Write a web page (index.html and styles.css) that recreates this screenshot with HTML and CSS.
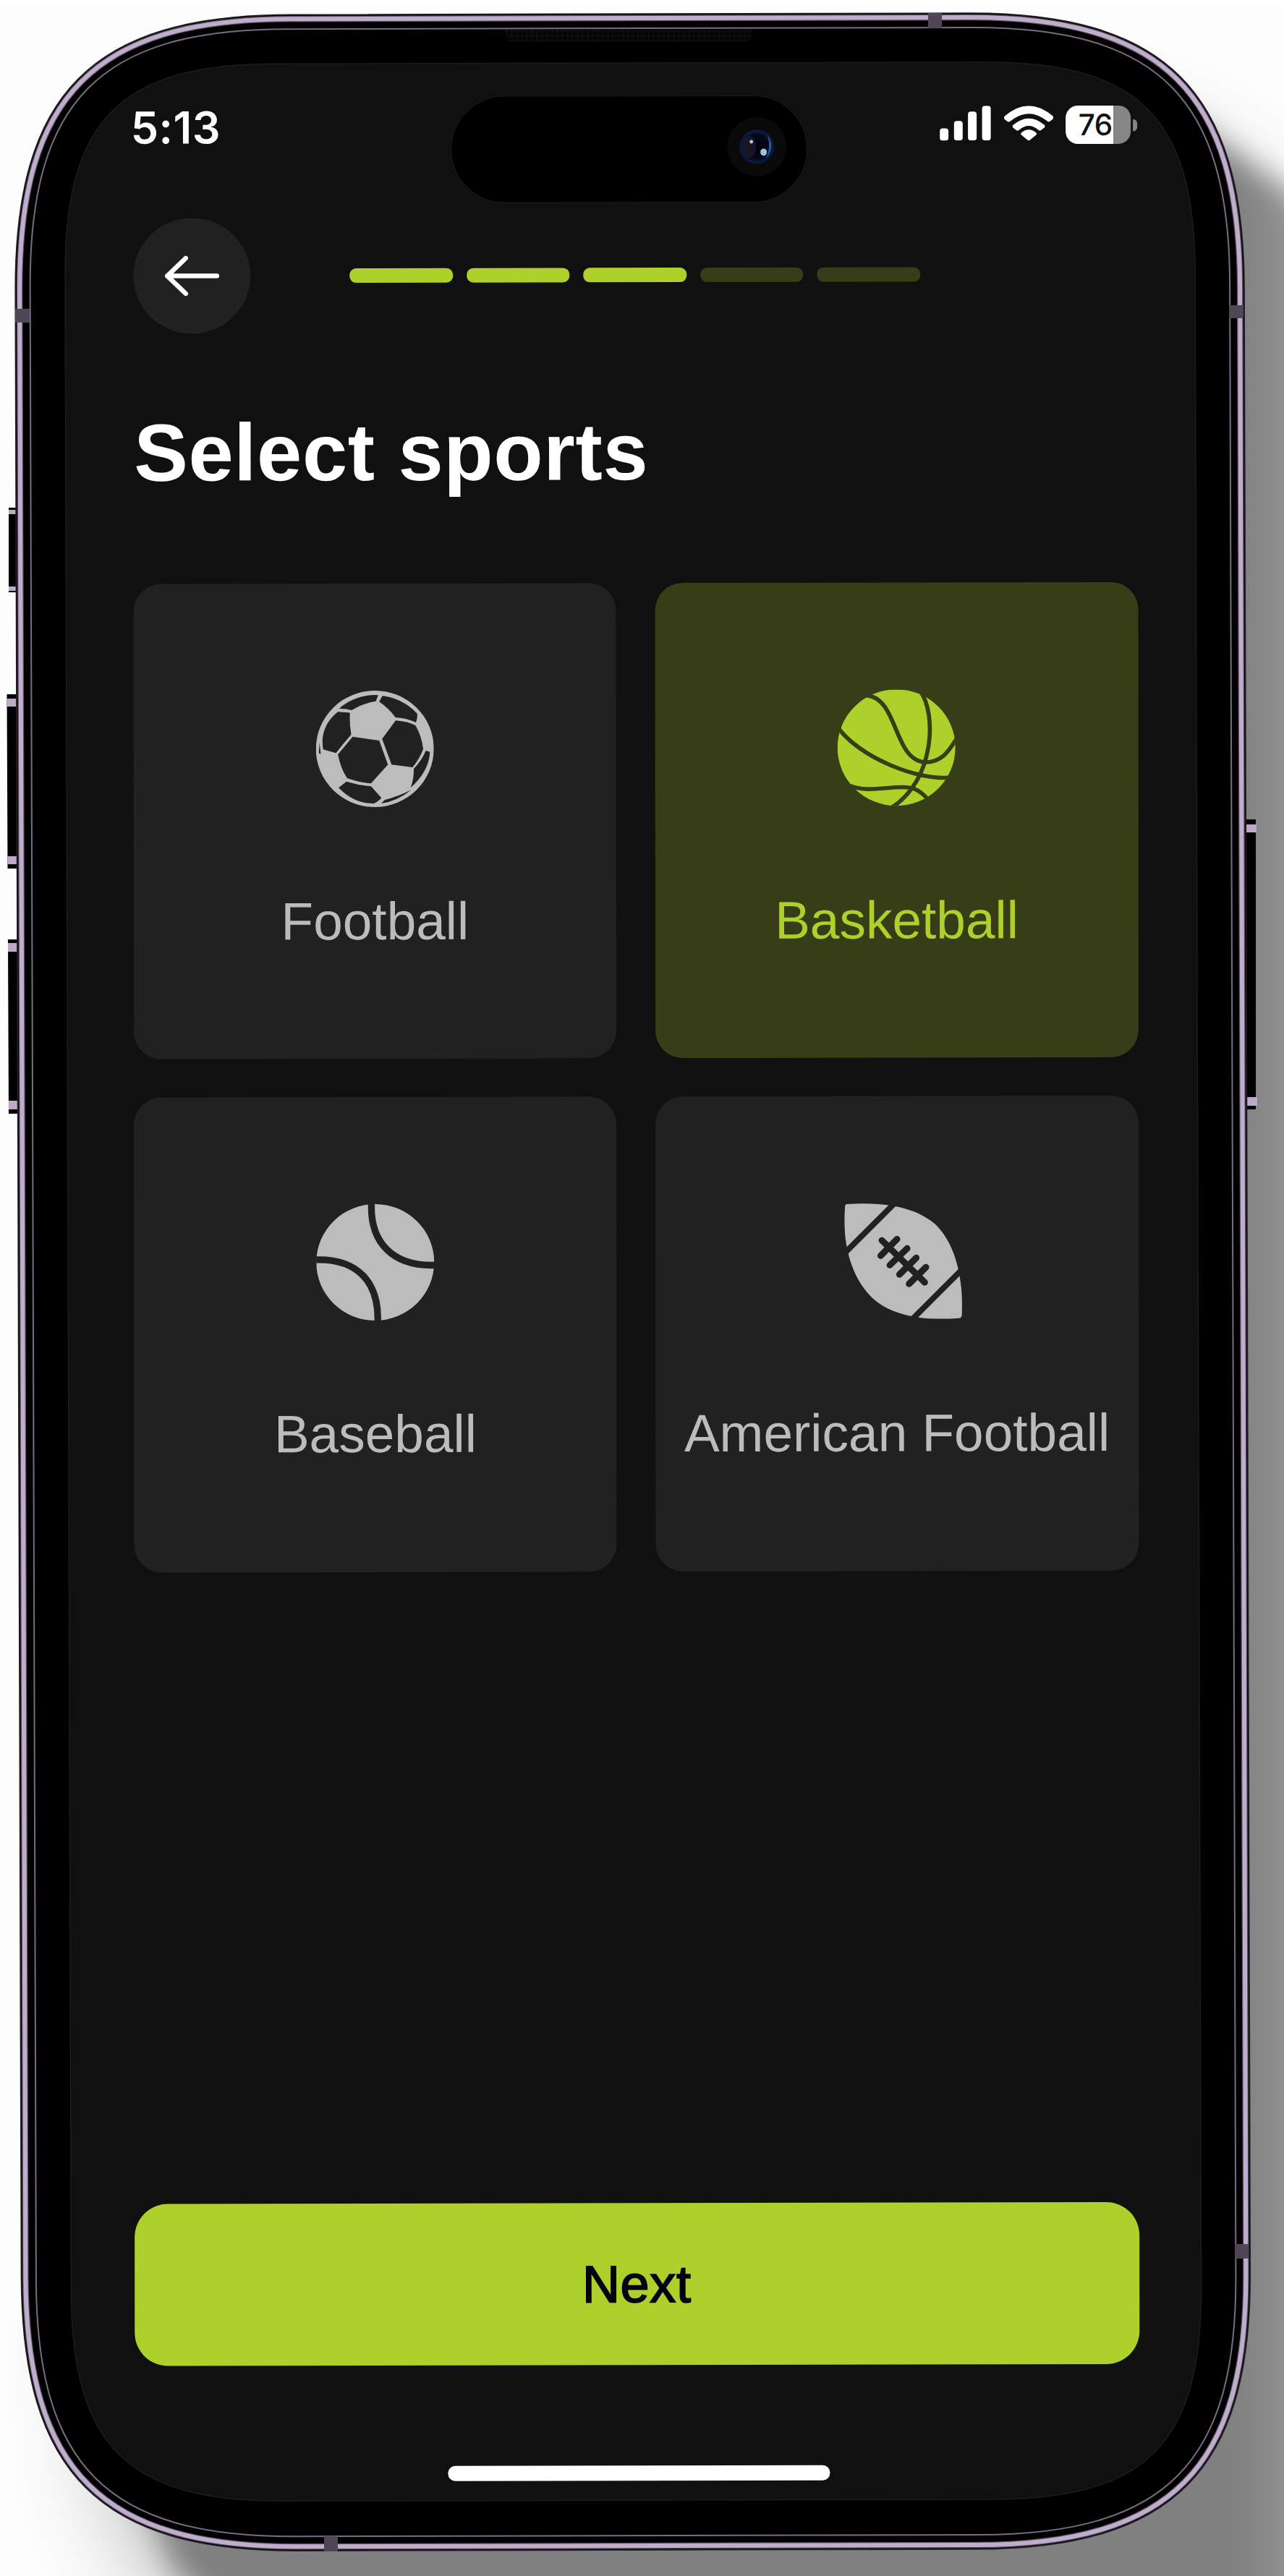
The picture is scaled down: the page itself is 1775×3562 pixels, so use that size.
FILE: index.html
```html
<!DOCTYPE html>
<html lang="en">
<head>
<meta charset="utf-8">
<title>Select sports</title>
<link rel="stylesheet" href="styles.css">
</head>
<body>
<main class="stage">
  <svg class="device" viewBox="0 0 1775 3562" aria-hidden="true">
    <defs>
      <filter id="soft" x="-20%" y="-20%" width="140%" height="140%"><feGaussianBlur stdDeviation="70"/></filter>
      <filter id="edge" x="-20%" y="-20%" width="140%" height="140%"><feGaussianBlur stdDeviation="20"/></filter>
      <linearGradient id="cast" gradientUnits="userSpaceOnUse" x1="1710" y1="0" x2="1790" y2="0">
        <stop offset="0" stop-color="#808080"/><stop offset="1" stop-color="#949494"/>
      </linearGradient>
      <linearGradient id="lit" x1="0" y1="0" x2="1" y2="0">
        <stop offset="0" stop-color="#fdfdfd"/><stop offset=".9" stop-color="#fdfdfd"/><stop offset="1" stop-color="#fdfdfd" stop-opacity="0"/>
      </linearGradient>
      <pattern id="mesh" width="7" height="7" patternUnits="userSpaceOnUse">
        <rect width="7" height="7" fill="#050505"/><path d="M0 0H7M0 0V7" stroke="#171615" stroke-width="1.500"/>
      </pattern>
    </defs>
    <!-- cast shadow -->
    <rect y="8" width="1775" height="3554" fill="#fdfdfd"/>
    <rect x="150" y="190" width="1660" height="3480" rx="320" fill="#000" opacity=".3" filter="url(#soft)"/>
    <path d="M1500 300L1640 165L1810 285V3700H400L240 3550L150 3300V600Z" fill="url(#cast)" filter="url(#edge)"/>
    <rect y="8" width="60" height="3200" fill="url(#lit)"/>
    <!-- side buttons -->
    <g>
      <path d="M12 702H24V819H12ZM9.500 960H26V1201H10.500ZM11 1299H28V1540H12Z"/>
      <path d="M12 705h10v6h-10zM12 811h10v6h-10zM9.500 966h14v11h-14zM10.500 1184h14v11h-14zM11 1304h14v12h-14zM12 1522h14v12h-14z" fill="#bdaac6"/>
      <path d="M1718 1133H1736V1534H1718Z"/>
      <path d="M1736.500 1150V1520" stroke="#8a7d8c"/>
      <path d="M1722 1140h15v11h-15zM1723 1517h15v12h-15z" fill="#bdaac6"/>
    </g>
    <!-- body, bevels and glass -->
    <g transform="matrix(1 -.0022 .003 1 20 21)">
      <path d="M0 380C0 108 108 0 380 0H1319C1591 0 1699 108 1699 380V3127C1699 3399 1591 3507 1319 3507H380C108 3507 0 3399 0 3127Z" fill="#000" stroke="#26222a" stroke-width="1.500"/>
      <path d="M6 380C6 111 111 6 380 6H1319C1588 6 1693 111 1693 380V3127C1693 3396 1588 3501 1319 3501H380C111 3501 6 3396 6 3127Z" fill="none" stroke="#5a4f62" stroke-width="8.500"/>
      <path d="M6 380C6 111 111 6 380 6H1319C1588 6 1693 111 1693 380V3127C1693 3396 1588 3501 1319 3501H380C111 3501 6 3396 6 3127Z" fill="none" stroke="#c0adcb" stroke-width="6"/>
      <path d="M20.500 376C20.500 118 118 20 376 20H1323C1581 20 1679 118 1679 376V3131C1679 3389 1581 3487 1323 3487H376C118 3487 20.500 3389 20.500 3131Z" fill="none" stroke="#7a6b82" stroke-width="2"/>
      <path d="M69 359C69 146 146 68 359 68H1342C1555 68 1631 146 1631 359V3148C1631 3361 1555 3438 1342 3438H359C146 3438 69 3361 69 3148Z" fill="#101010" stroke="#1d1d1d" stroke-width="1.500"/>
    </g>
    <path d="M697 41H1041L1036 54Q1035 57 1031 57H708Q703 57 702 54Z" fill="url(#mesh)"/>
    <path d="M1283 18h19v21h-19zM21 427h20v19h-20zM1699 422h20v18h-20zM448 3507h19v21h-19zM1707 3103h19v20h-19z" fill="#4f4656"/>
  </svg>

  <div class="screen">
    <header class="status">
      <time class="clock">5:13</time>
      <div class="island">
        <svg class="lens" viewBox="0 0 84 84" aria-hidden="true">
          <defs><radialGradient id="glass"><stop offset="0" stop-color="#020208"/><stop offset=".65" stop-color="#05061a"/><stop offset=".88" stop-color="#0c1d42"/><stop offset="1" stop-color="#05070d"/></radialGradient></defs>
          <circle cx="42" cy="42" r="41" fill="#0a0a0a"/>
          <circle cx="42" cy="42" r="25" fill="url(#glass)"/>
          <ellipse cx="32" cy="42" rx="9" ry="15" fill="#25212f" opacity=".6"/>
          <path d="M57 26Q68 42 55 58Q62 42 57 26Z" fill="#2a5f9c"/>
          <circle cx="34.500" cy="35" r="2.500" fill="#cdb9cf"/>
          <ellipse cx="51.500" cy="49.500" rx="4.500" ry="5" fill="#9fc3de"/>
        </svg>
      </div>
      <div class="indicators">
        <svg class="signal" viewBox="0 0 71 48" aria-hidden="true"><g fill="#fff"><rect y="31" width="12" height="17" rx="4"/><rect x="19.700" y="21" width="12" height="27" rx="4"/><rect x="39" y="8" width="12" height="40" rx="4"/><rect x="58.500" width="12" height="48" rx="4"/></g></svg>
        <svg class="wifi" viewBox="0 0 68 48" aria-hidden="true"><path d="M0 15Q34 -15 68 15Q69 17 67 19L63 22Q61 23 59 21Q34 1 9 21Q7 23 5 22L1 19Q-1 17 0 15ZM12 27Q34 8 56 27Q57 29 55.500 30.500L51 34Q49 35 47.500 33.500Q34 22 20.500 33.500Q19 35 17 34L12.500 30.500Q11 29 12 27ZM24 37Q34 29 44 37Q46 39 44 40.500L35.500 47.500Q34 49 32.500 47.500L24 40.500Q22 39 24 37Z" fill="#fff"/></svg>
        <div class="battery"><span class="level">76</span></div>
        <span class="cap"></span>
      </div>
    </header>

    <nav class="topbar">
      <button class="back" aria-label="Back">
        <svg class="arrow" viewBox="0 0 76 56" aria-hidden="true"><path d="M72.500 28H4M29.500 3.500L4 28L29.500 52.500" fill="none" stroke="#fff" stroke-width="6.500" stroke-linecap="round" stroke-linejoin="round"/></svg>
      </button>
      <div class="steps">
        <span class="step done"></span><span class="step done"></span><span class="step done"></span><span class="step"></span><span class="step"></span>
      </div>
    </nav>

    <h1 class="title">Select sports</h1>

    <section class="sports">
      <button class="card">
        <svg class="icon" viewBox="112 106 488 482" aria-hidden="true">
          <ellipse cx="356" cy="347" rx="244" ry="241" fill="#bcbcbc"/>
          <g fill="#212121">
            <path d="M208 181C245 145 310 120 370 125L360 150C325 155 290 168 260 187Q235 180 208 181Z"/>
            <path d="M387 128C440 132 500 165 532 203Q533 222 526 238C500 226 470 218 441 217Q415 180 374 152Z"/>
            <path d="M203 193L253 197Q250 240 258 288Q225 325 195 364L142 349Q126 255 203 193Z"/>
            <path d="M127 322L132 368L124 364Z"/>
            <path d="M264 297L374 313L410 412L340 490Q290 486 241 468Q215 430 203 370Z"/>
            <path d="M442 230Q485 232 524 250Q550 295 556 348Q540 390 512 424L425 412L386 306Z"/>
            <path d="M567 355L584 360Q580 440 504 508Q518 470 517 430Q550 395 567 355Z"/>
            <path d="M206 508L238 482Q290 498 340 502L383 550Q372 564 352 573Q270 575 206 508Z"/>
            <path d="M397 558Q450 545 506 517Q450 563 382 573Z"/>
          </g>
        </svg>
        <span class="label">Football</span>
      </button>
      <button class="card selected">
        <svg class="icon" viewBox="113 102 488 482" aria-hidden="true">
          <defs><clipPath id="bball"><ellipse cx="357" cy="342" rx="245" ry="242"/></clipPath></defs>
          <ellipse cx="357" cy="342" rx="244" ry="241" fill="#aed02b"/>
          <g clip-path="url(#bball)" fill="none" stroke="#373e17" stroke-width="17">
            <path d="M236 126C365 140 345 395 475 403C555 405 585 335 610 300"/>
            <path d="M455 108C525 200 515 480 335 592"/>
            <path d="M115 258C200 380 450 485 590 465"/>
            <path d="M165 500C240 530 330 500 400 507C440 510 465 530 492 562"/>
          </g>
        </svg>
        <span class="label">Basketball</span>
      </button>
      <button class="card">
        <svg class="icon" viewBox="113 76 488 482" aria-hidden="true">
          <ellipse cx="357" cy="317" rx="244" ry="241" fill="#bcbcbc"/>
          <g fill="none" stroke="#212121" stroke-width="28">
            <path d="M342 65C332 235 430 337 610 329"/>
            <path d="M105 306C285 299 375 400 367 570"/>
          </g>
        </svg>
        <span class="label">Baseball</span>
      </button>
      <button class="card">
        <svg class="icon oval" viewBox="109 69 490 482" aria-hidden="true">
          <path d="M120 72C260 64 400 80 485 155C570 235 605 380 597 535Q596 546 586 547C440 557 310 540 225 462C135 375 99 230 112 82Q112 73 120 72Z" fill="#bcbcbc"/>
          <g fill="none" stroke="#212121">
            <path d="M325 62L100 286M610 333L380 562" stroke-width="24"/>
            <path d="M265 223L443 398M328 218L260 287M370 257L298 326M408 296L338 365M448 335L378 404" stroke-width="27" stroke-linecap="round"/>
          </g>
        </svg>
        <span class="label">American Football</span>
      </button>
    </section>

    <button class="next">Next</button>
    <div class="home"></div>
  </div>
</main>
</body>
</html>
```
FILE: styles.css
```css
* { box-sizing: border-box; }

body {
  margin: 0;
  background: #fff;
  font-family: "Liberation Sans", Arial, sans-serif;
}

button {
  border: 0;
  padding: 0;
  font: inherit;
}

.stage {
  display: grid;
  width: 1775px;
  height: 3562px;
  overflow: hidden;
}

.device,
.screen { grid-area: 1 / 1; }

.device {
  display: block;
  width: 1775px;
  height: 3562px;
}

.screen {
  display: flex;
  flex-direction: column;
  padding: 133.7px 202.500px 0 183.700px;
  transform: matrix(1, -.002, .0007, 1, 0, 0);
  transform-origin: 0 0;
}

/* status bar */
.status {
  display: flex;
  align-items: flex-start;
  height: 148.300px;
  flex: none;
}

.clock {
  width: 439.500px;
  margin-top: 13.500px;
  font: 600 61px/60px Inter, sans-serif;
  letter-spacing: .4px;
  text-indent: -3px;
  color: #fff;
}

.island {
  display: flex;
  align-items: center;
  justify-content: flex-end;
  width: 492.500px;
  height: 148.300px;
  padding: 0 27px 6px 0;
  border: 1.500px solid #1b1b1b;
  border-radius: 74px;
  background: #000;
}

.lens { width: 84px; height: 84px; }

.indicators {
  display: flex;
  align-items: flex-start;
  margin: 15.200px 0 0 183px;
}

.signal { width: 71px; height: 48px; }
.wifi { width: 68px; height: 48px; margin-left: 18px; }

.battery {
  width: 90px;
  height: 53px;
  margin-left: 17px;
  border-radius: 17px;
  background: linear-gradient(90deg, #fff 66px, #858585 66px);
}

.level {
  display: block;
  padding-left: 18px;
  font: 500 40.500px/53px Inter, sans-serif;
  letter-spacing: -.5px;
  color: #111;
}

.cap {
  width: 6px;
  height: 17px;
  margin: 19px 0 0 3px;
  border-radius: 0 6px 6px 0;
  background: #858585;
}

/* navigation row */
.topbar {
  display: flex;
  align-items: center;
  margin-top: 20px;
}

.back {
  display: flex;
  align-items: center;
  width: 162px;
  height: 160px;
  padding-left: 43px;
  border-radius: 50%;
  background: #212121;
}

.arrow { width: 76px; height: 56px; }

.steps {
  display: flex;
  gap: 19px;
  margin-left: 137.500px;
}

.step {
  width: 142.500px;
  height: 20.500px;
  border-radius: 9px;
  background: #373e17;
}

.step.done { background: #aed02b; }

.title {
  margin: 108.700px 0 0;
  font-size: 112px;
  line-height: 112px;
  font-weight: 700;
  letter-spacing: .6px;
  text-indent: 1px;
  color: #fff;
}

/* sport cards */
.sports {
  display: grid;
  grid-template-columns: 1fr 1fr;
  grid-auto-rows: 657px;
  gap: 52.500px 53.500px;
  margin-top: 125.700px;
}

.card {
  display: flex;
  flex-direction: column;
  align-items: center;
  padding-top: 148px;
  border-radius: 38px;
  background: #212121;
  color: #bcbcbc;
}

.card.selected {
  background: #373e17;
  color: #aed02b;
}

.icon { width: 163px; height: 161px; }
.icon.oval { margin-left: 17px; }

.label {
  margin-top: 120.500px;
  font-size: 73px;
  line-height: 73px;
  white-space: nowrap;
}

.next {
  height: 224px;
  margin-top: 873px;
  border-radius: 46px;
  background: #aed02b;
  color: #02030f;
  font-size: 72px;
  letter-spacing: .7px;
  -webkit-text-stroke: 1.800px #02030f;
}

.home {
  width: 528px;
  height: 21px;
  margin: 139px 0 0 433px;
  border-radius: 10px;
  background: #fff;
}
```
